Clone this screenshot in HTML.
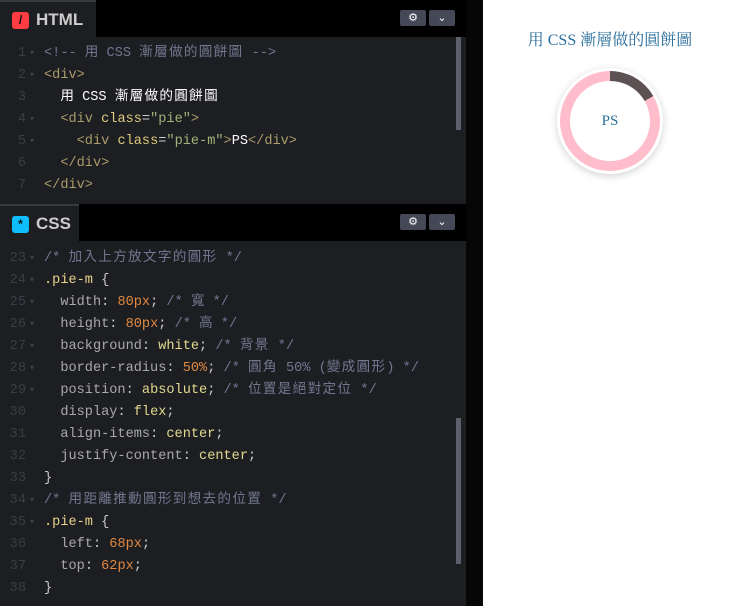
<!DOCTYPE html>
<html><head><meta charset="utf-8"><style>
*{margin:0;padding:0;box-sizing:border-box}
body{width:729px;height:606px;background:#fff;position:relative;overflow:hidden;font-family:"Liberation Sans","Noto Sans CJK TC",sans-serif}
.col{position:absolute;left:0;top:0;width:466px;height:606px;background:#1d1e22}
.strip{position:absolute;left:466px;top:0;width:17px;height:606px;background:#060606}
.hdr{position:absolute;left:0;width:466px;height:37px;background:#000}
.tab{position:absolute;left:0;top:0;height:37px;background:#1d1e22;border-top:2px solid #3a3b40;color:#ccc;font-weight:bold;font-size:17px;padding:8px 0 0 36px}
.ico{position:absolute;left:12px;top:10px;width:17px;height:17px;border-radius:3px;color:#111;font-size:12px;text-align:center;line-height:17px}
.btn{position:absolute;top:10px;width:26px;height:16px;background:#444857;border-radius:2px;color:#fff;font-size:11px;text-align:center;line-height:16px}
.code{position:absolute;left:0;font-family:"Liberation Mono","Noto Sans CJK TC",monospace;font-size:13.6px;color:#ccc}
.l{height:22px;line-height:22px;white-space:pre;position:relative;padding-left:44px}
.n{position:absolute;left:0;width:26px;text-align:right;color:#3b3d44}
.a{position:absolute;left:30px;color:#3f414a;font-size:8px}
.c{color:#717790}.t{color:#ab9c6b}.at{color:#ddca7e}.s{color:#a3b27a}.p{color:#a9a9a9}.v{color:#e3d98f}.num{color:#e08840}.sel{color:#e8d28b}.w{color:#fff}
.k{letter-spacing:1.3px}
.sb{position:absolute;left:456px;width:5px;background:#5c5f6c}
</style></head><body>
<div class="col"></div><div class="strip"></div>
<div class="hdr" style="top:0"><div class="tab" style="width:96px"><div class="ico" style="background:#ff3c41">/</div>HTML</div>
<div class="btn" style="left:400px">⚙</div><div class="btn" style="left:429px">⌄</div></div>
<div class="code" style="top:43px">
<div class="l"><span class="n">1</span><span class="a">▾</span><span class="c">&lt;!-- 用 CSS <span class="k">漸層做的圓餅圖</span> --&gt;</span></div>
<div class="l"><span class="n">2</span><span class="a">▾</span><span class="t">&lt;div&gt;</span></div>
<div class="l"><span class="n">3</span><span class="w">  用 CSS <span class="k">漸層做的圓餅圖</span></span></div>
<div class="l"><span class="n">4</span><span class="a">▾</span>  <span class="t">&lt;div </span><span class="at">class</span>=<span class="s">"pie"</span><span class="t">&gt;</span></div>
<div class="l"><span class="n">5</span><span class="a">▾</span>    <span class="t">&lt;div </span><span class="at">class</span>=<span class="s">"pie-m"</span><span class="t">&gt;</span><span class="w">PS</span><span class="t">&lt;/div&gt;</span></div>
<div class="l"><span class="n">6</span>  <span class="t">&lt;/div&gt;</span></div>
<div class="l"><span class="n">7</span><span class="t">&lt;/div&gt;</span></div>
</div>
<div class="sb" style="top:37px;height:93px"></div>
<div class="hdr" style="top:204px"><div class="tab" style="width:79px"><div class="ico" style="background:#0ebeff">*</div>CSS</div>
<div class="btn" style="left:400px">⚙</div><div class="btn" style="left:429px">⌄</div></div>
<div class="code" style="top:248px">
<div class="l"><span class="n">23</span><span class="a">▾</span><span class="c">/* <span class="k">加入上方放文字的圓形</span> */</span></div>
<div class="l"><span class="n">24</span><span class="a">▾</span><span class="sel">.pie-m</span> {</div>
<div class="l"><span class="n">25</span><span class="a">▾</span>  <span class="p">width</span>: <span class="num">80px</span>; <span class="c">/* 寬 */</span></div>
<div class="l"><span class="n">26</span><span class="a">▾</span>  <span class="p">height</span>: <span class="num">80px</span>; <span class="c">/* 高 */</span></div>
<div class="l"><span class="n">27</span><span class="a">▾</span>  <span class="p">background</span>: <span class="v">white</span>; <span class="c">/* <span class="k">背景</span> */</span></div>
<div class="l"><span class="n">28</span><span class="a">▾</span>  <span class="p">border-radius</span>: <span class="num">50%</span>; <span class="c">/* <span class="k">圓角</span> 50% (<span class="k">變成圓形</span>) */</span></div>
<div class="l"><span class="n">29</span><span class="a">▾</span>  <span class="p">position</span>: <span class="v">absolute</span>; <span class="c">/* <span class="k">位置是絕對定位</span> */</span></div>
<div class="l"><span class="n">30</span>  <span class="p">display</span>: <span class="v">flex</span>;</div>
<div class="l"><span class="n">31</span>  <span class="p">align-items</span>: <span class="v">center</span>;</div>
<div class="l"><span class="n">32</span>  <span class="p">justify-content</span>: <span class="v">center</span>;</div>
<div class="l"><span class="n">33</span>}</div>
<div class="l"><span class="n">34</span><span class="a">▾</span><span class="c">/* <span class="k">用距離推動圓形到想去的位置</span> */</span></div>
<div class="l"><span class="n">35</span><span class="a">▾</span><span class="sel">.pie-m</span> {</div>
<div class="l"><span class="n">36</span>  <span class="p">left</span>: <span class="num">68px</span>;</div>
<div class="l"><span class="n">37</span>  <span class="p">top</span>: <span class="num">62px</span>;</div>
<div class="l"><span class="n">38</span>}</div>
</div>
<div class="sb" style="top:418px;height:146px"></div>
<div style="position:absolute;left:483px;width:254px;top:27px;text-align:center;font-family:'Liberation Serif','Noto Serif CJK SC',serif;font-size:16px;color:#2a6e9b">用 CSS 漸層做的圓餅圖</div>
<div style="position:absolute;left:557px;top:68px;width:106px;height:106px;border-radius:50%;background:#fff;box-shadow:0 2px 8px rgba(0,0,0,.18)"></div>
<div style="position:absolute;left:560px;top:71px;width:100px;height:100px;border-radius:50%;background:conic-gradient(#5e5154 0 60deg,#ffbcca 60deg 360deg)"></div>
<div style="position:absolute;left:570px;top:81px;width:80px;height:80px;border-radius:50%;background:#fff;display:flex;align-items:center;justify-content:center;font-family:'Liberation Serif',serif;font-size:15px;color:#2a6e9b">PS</div>
</body></html>
